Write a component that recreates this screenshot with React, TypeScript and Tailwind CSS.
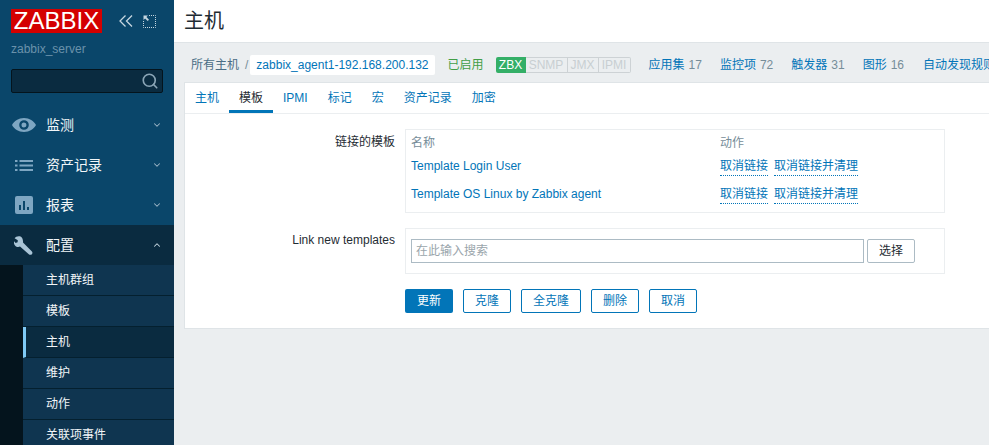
import { ChevronDown, ChevronUp, Search } from "lucide-react";

const FONT = "font-['Liberation_Sans','Noto_Sans_CJK_SC',sans-serif]";

const subItems = ["主机群组", "模板", "主机", "维护", "动作", "关联项事件"];
const hostLinks = [
  ["应用集", "17"],
  ["监控项", "72"],
  ["触发器", "31"],
  ["图形", "16"],
];
const tabs = ["主机", "模板", "IPMI", "标记", "宏", "资产记录", "加密"];
const templates = ["Template Login User", "Template OS Linux by Zabbix agent"];

function EyeIcon() {
  return (
    <svg width="24" height="14" viewBox="0 0 24 14">
      <path
        fill="#7ea6c2"
        fillRule="evenodd"
        d="M12 0C6.500 0 2.200 3.200 0 7c2.200 3.800 6.500 7 12 7s9.800-3.200 12-7c-2.200-3.800-6.500-7-12-7zm0 2.200a4.800 4.800 0 1 1 0 9.600 4.800 4.800 0 0 1 0-9.600zm0 2.300a2.500 2.500 0 1 0 0 5 2.500 2.500 0 0 0 0-5z"
      />
    </svg>
  );
}

function ListIcon() {
  return (
    <svg width="18" height="11" viewBox="0 0 18 11" fill="#7ea6c2">
      <rect x="0" y="0" width="2.500" height="2" />
      <rect x="4.500" y="0" width="13.500" height="2" />
      <rect x="0" y="4.500" width="2.500" height="2" />
      <rect x="4.500" y="4.500" width="13.500" height="2" />
      <rect x="0" y="9" width="2.500" height="2" />
      <rect x="4.500" y="9" width="13.500" height="2" />
    </svg>
  );
}

function ChartIcon() {
  return (
    <svg width="18" height="18" viewBox="0 0 18 18">
      <rect width="18" height="18" rx="2" fill="#7ea6c2" />
      <rect x="4" y="9" width="2" height="5" fill="#0a466a" />
      <rect x="8" y="5" width="2" height="9" fill="#0a466a" />
      <rect x="12" y="11" width="2" height="3" fill="#0a466a" />
    </svg>
  );
}

function WrenchIcon() {
  return (
    <svg width="19" height="19" viewBox="0 0 19 19">
      <path
        fill="#a9c4d6"
        d="M6 .3C3.800-.2 1.600.6.600 2.300l3.200 2-.2 2-2 .6L.2 5.200C-.5 7.300.2 9.400 2 10.400c1.300.7 2.800.7 4 .2l8.800 7.700c.9.800 2.300.7 3.100-.1.800-.9.7-2.200-.2-3L9 6.600C9.300 4 8.300 1 6 .3z"
      />
    </svg>
  );
}

function MenuRow({ icon, label, open }: { icon: React.ReactNode; label: string; open?: boolean }) {
  return (
    <div className={`flex h-10 items-center ${open ? "bg-[#0a2b40]" : ""}`}>
      <div className="flex w-[46px] justify-center pl-[1px]">{icon}</div>
      <span className="text-[14px] text-[#f2f6f8]">{label}</span>
      {open ? (
        <ChevronUp size={10} strokeWidth={2.500} className="ml-auto mr-[12px] text-[#c6d6e0]" />
      ) : (
        <ChevronDown size={10} strokeWidth={2.500} className="ml-auto mr-[12px] text-[#9fb8c8]" />
      )}
    </div>
  );
}

function Sidebar() {
  return (
    <aside className="flex w-[174px] shrink-0 flex-col bg-[#0a466a]">
      <div className="flex shrink-0 items-start pl-[11px] pt-[9px]">
        <div className="flex h-[24px] w-[91px] items-center justify-center bg-[#d40000] text-[24px] leading-none text-white">
          ZABBIX
        </div>
        <svg width="14" height="12" viewBox="0 0 14 12" fill="none" stroke="#c6d6e0" strokeWidth="1.300" className="ml-[17px] mt-[6px]">
          <path d="M6.500 .5 1 6l5.500 5.500M13 .5 7.500 6l5.500 5.500" />
        </svg>
        <svg width="13" height="13" viewBox="0 0 13 13" className="ml-[10px] mt-[6px]">
          <path d="M6 .5h6.500v12H.5V6" stroke="#c6d6e0" strokeDasharray="1 1" fill="none" />
          <path d="M.5 .5h4.500l-1.600 1.600 2.600 2.600-1.300 1.300-2.600-2.600L.5 5z" fill="#c6d6e0" />
        </svg>
      </div>
      <div className="mt-[8px] shrink-0 pl-[11px] text-[12px] leading-[16px] text-[#6a92ab]">zabbix_server</div>
      <div className="mx-[11px] mt-[12px] flex h-[24px] shrink-0 items-center justify-end rounded-[2px] border border-[#04141d] bg-[#0a2b40] pr-[3px]">
        <Search size={18} strokeWidth={2.200} className="text-[#8aa5b6]" />
      </div>
      <nav className="mt-[12px] shrink-0">
        <MenuRow icon={<EyeIcon />} label="监测" />
        <MenuRow icon={<ListIcon />} label="资产记录" />
        <MenuRow icon={<ChartIcon />} label="报表" />
        <MenuRow icon={<WrenchIcon />} label="配置" open />
        <div className="border-l-[23px] border-[#04141d]">
          {subItems.map((item) => (
            <div
              key={item}
              className={`flex h-[31px] items-center border-b border-[#04202f] text-[12px] text-[#f2f6f8] ${
                item === "主机" ? "border-l-[3px] border-l-[#7fcaf5] bg-[#0a2b40] pl-[20px]" : "bg-[#0f3550] pl-[23px]"
              }`}
            >
              {item}
            </div>
          ))}
        </div>
      </nav>
    </aside>
  );
}

function HostBar() {
  return (
    <div className="flex h-[39px] items-center whitespace-nowrap pl-[7px] pt-[5px] text-[12px]">
      <span className="text-[#4a6d85]">所有主机</span>
      <span className="ml-[6px] text-[#768d99]">/</span>
      <span className="ml-[2px] flex h-[20px] items-center rounded-[2px] bg-white px-[6px] text-[#0275b8]">
        zabbix_agent1-192.168.200.132
      </span>
      <span className="ml-[13px] text-[#429e47]">已启用</span>
      <div className="ml-[12px] flex h-[16px] items-stretch leading-[14px]">
        <span className="flex w-[30px] items-center justify-center rounded-l-[2px] bg-[#34af67] text-white">ZBX</span>
        <span className="flex w-[42px] items-center justify-center border-y border-r border-[#cdd2d5] text-[#c8ced2]">SNMP</span>
        <span className="flex w-[31px] items-center justify-center border-y border-r border-[#cdd2d5] text-[#c8ced2]">JMX</span>
        <span className="flex w-[32px] items-center justify-center rounded-r-[2px] border-y border-r border-[#cdd2d5] text-[#c8ced2]">IPMI</span>
      </div>
      {hostLinks.map(([label, count]) => (
        <span key={label} className="ml-[18px]">
          <span className="text-[#0275b8]">{label}</span>
          <span className="ml-[4px] text-[#768d99]">{count}</span>
        </span>
      ))}
      <span className="ml-[19px] text-[#0275b8]">自动发现规则</span>
    </div>
  );
}

function Tabs() {
  return (
    <div className="flex h-[31px] items-stretch border-b border-[#ebeef0] text-[12px]">
      {tabs.map((tab) => (
        <div
          key={tab}
          className={`flex items-center px-[10px] ${
            tab === "模板" ? "border-b-[3px] border-[#0275b8] pt-[3px] text-[#1f2c33]" : "text-[#0275b8]"
          }`}
        >
          {tab}
        </div>
      ))}
    </div>
  );
}

function LinkedTemplates() {
  return (
    <div className="flex">
      <div className="w-[220px] pr-[10px] pt-[4px] text-right text-[#1f2c33]">链接的模板</div>
      <div className="h-[84px] w-[540px] border border-[#ebeef0] px-[5px] pt-[3px]">
        <div className="flex h-[19px] items-center text-[#768d99]">
          <span className="w-[309px]">名称</span>
          <span>动作</span>
        </div>
        {templates.map((name) => (
          <div key={name} className="flex h-[28px] items-center">
            <span className="w-[309px] text-[#0275b8]">{name}</span>
            <span className="border-b border-dotted border-[#0275b8] text-[#0275b8]">取消链接</span>
            <span className="ml-[6px] border-b border-dotted border-[#0275b8] text-[#0275b8]">取消链接并清理</span>
          </div>
        ))}
      </div>
    </div>
  );
}

function NewTemplates() {
  return (
    <div className="mt-[15px] flex">
      <div className="w-[220px] pr-[10px] pt-[3px] text-right text-[#1f2c33]">Link new templates</div>
      <div className="flex h-[46px] w-[540px] items-center border border-[#ebeef0] pl-[5px]">
        <div className="flex h-[24px] w-[453px] items-center border border-[#acbbc4] px-[4px] text-[#9aa5ab]">在此输入搜索</div>
        <button className="ml-[3px] h-[24px] w-[48px] rounded-[2px] border border-[#acbbc4] bg-white text-[#1f2c33]">选择</button>
      </div>
    </div>
  );
}

function Actions() {
  const buttons = [
    { label: "克隆", w: "w-[48px]" },
    { label: "全克隆", w: "w-[60px]" },
    { label: "删除", w: "w-[48px]" },
    { label: "取消", w: "w-[48px]" },
  ];
  return (
    <div className="mt-[15px] flex gap-[10px] pl-[220px]">
      <button className="h-[24px] w-[48px] rounded-[2px] bg-[#0275b8] text-white">更新</button>
      {buttons.map((b) => (
        <button
          key={b.label}
          className={`h-[24px] ${b.w} rounded-[2px] border border-[#0275b8] bg-white text-[#0275b8]`}
        >
          {b.label}
        </button>
      ))}
    </div>
  );
}

export default function App() {
  return (
    <div className={`flex h-[445px] w-[989px] overflow-hidden bg-[#ebeef0] ${FONT}`}>
      <Sidebar />
      <main className="min-w-0 flex-1 overflow-hidden">
        <header className="flex h-[43px] items-center border-b border-[#dfe4e7] bg-white pl-[10px] text-[20px] text-[#1f2c33]">
          主机
        </header>
        <div className="pl-[10px]">
          <HostBar />
          <div className="h-[247px] border border-r-0 border-[#dfe4e7] bg-white">
            <Tabs />
            <div className="pt-[15px] text-[12px]">
              <LinkedTemplates />
              <NewTemplates />
              <Actions />
            </div>
          </div>
        </div>
      </main>
    </div>
  );
}
